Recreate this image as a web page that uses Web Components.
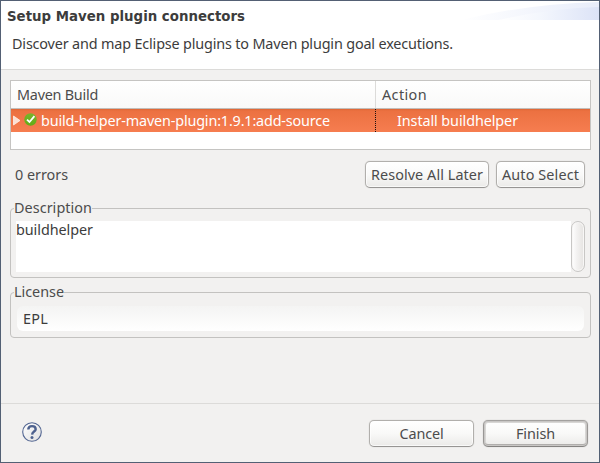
<!DOCTYPE html>
<html lang="en"><head><meta charset="utf-8"><title>Setup Maven plugin connectors</title>
<style>
html,body{margin:0;height:100%;overflow:hidden}
body{font:14.4px/20px "Noto Sans","Open Sans",sans-serif;color:#4c4c4c}
</style></head><body>
<wizard-dialog>
  <wizard-header slot="header">
    <fit-text slot="title" width="238">Setup Maven plugin connectors</fit-text>
    <fit-text slot="message" width="441">Discover and map Eclipse plugins to Maven plugin goal executions.</fit-text>
  </wizard-header>
  <build-table></build-table>
  <status-row>
    <fit-text width="53">0 errors</fit-text>
    <push-button slot="actions" style="width:124px"><fit-text width="112">Resolve All Later</fit-text></push-button>
    <push-button slot="actions" style="width:89px"><fit-text width="77">Auto Select</fit-text></push-button>
  </status-row>
  <group-box style="height:70px">
    <fit-text slot="legend" width="78">Description</fit-text>
    <text-area><fit-text width="77">buildhelper</fit-text></text-area>
  </group-box>
  <group-box style="height:46px;margin-top:14px">
    <fit-text slot="legend" width="50">License</fit-text>
    <text-field><fit-text width="25">EPL</fit-text></text-field>
  </group-box>
  <wizard-footer slot="footer">
    <push-button style="width:105px"><fit-text width="44">Cancel</fit-text></push-button>
    <push-button default style="width:105px"><fit-text width="39">Finish</fit-text></push-button>
  </wizard-footer>
</wizard-dialog>
<script>
function define(name, html, ready) {
  const tpl = document.createElement('template');
  tpl.innerHTML = html;
  customElements.define(name, class extends HTMLElement {
    constructor() {
      super();
      this.attachShadow({mode: 'open'}).append(tpl.content.cloneNode(true));
    }
    connectedCallback() { if (ready) ready(this); }
  });
}

define('push-button', `<style>
:host{box-sizing:border-box;display:flex;align-items:center;justify-content:center;height:27px;
 border:1px solid #b1afac;border-bottom-color:#979593;border-radius:5px;
 background:linear-gradient(#fff,#f9f9f8 50%,#ebeae8);box-shadow:inset 0 0 0 1px #ffffffb0,0 0 1px #b8b6b2}
:host([default]){border-color:#a3a19f #999795 #858381;box-shadow:inset 0 0 0 1px #c9c7c5,inset 0 -2px 0 #b0aeac,inset 0 0 0 2px #d8d7d5,0 0 1px #aaa}
</style><slot></slot>`);

define('wizard-header', `<style>
:host{box-sizing:border-box;display:grid;grid-template:28px 1fr / 1fr;height:69px;background:#fff;border-bottom:1px solid #dcdbd9;color:#3c3c3c}
.t{display:flex;justify-content:space-between;padding:6px 0 0 6px;font:bold 13.33px/20px "DejaVu Sans",sans-serif}
svg{display:block;flex:none;margin-top:-6px;width:138px;height:19px}
.m{padding:5px 0 0 11px}
</style><div class="t"><slot name="title"></slot>
<svg viewBox="0 0 138 19"><defs>
<linearGradient id="a"><stop offset="0" stop-color="#fff"/><stop offset=".4" stop-color="#f4f7fd"/><stop offset="1" stop-color="#dce3f7"/></linearGradient>
<linearGradient id="b"><stop offset="0" stop-color="#fff"/><stop offset="1" stop-color="#e8edfa"/></linearGradient></defs>
<path d="M0 19Q65 3 138 1V19Z" fill="url(#b)"/><path d="M38 19Q90 7 138 6V19Z" fill="url(#a)"/></svg></div>
<div class="m"><slot name="message"></slot></div>`);

define('build-table', `<style>
:host{box-sizing:border-box;display:grid;grid-template-rows:28px 23px 1fr;height:70px;margin:0 -1px 0 0;border:1px solid #c5c4c2;background:#fff}
.h,.r{display:grid;grid-template-columns:364px 1fr}
.h{box-sizing:border-box;background:linear-gradient(#fff,#f9f9f8);border-bottom:1px solid #c2bdb9}
.h>div{padding:4px 0 0 6px}
.h>div+div{border-left:1px solid #dcdbd9}
.r{background:linear-gradient(#dd6635,#ec7141 2px,#f67d50);color:#fff}
.r>div{display:flex;align-items:flex-start;padding-top:2px}
.r>div+div{border-left:1px dotted #1a1010;padding-left:21px}
.arrow{width:8px;height:11px;margin:4px 0 0 2px}
.ok{width:13px;height:13px;margin:2px 4px 0 3px}
svg{flex:none;display:block}
</style><div class="h"><div><fit-text width="81">Maven Build</fit-text></div><div><fit-text width="45">Action</fit-text></div></div>
<div class="r"><div>
<svg class="arrow" viewBox="0 0 8 11"><path d="M.5 1V10L7 5.5Z" fill="#fce0d5" stroke="#fff1e9" stroke-width=".8"/></svg>
<svg class="ok" viewBox="0 0 13 13"><defs><linearGradient id="g" x2="0" y2="1"><stop stop-color="#78b52c"/><stop offset="1" stop-color="#62ac16"/></linearGradient></defs><circle cx="6.5" cy="6.5" r="6.2" fill="url(#g)"/><path d="M3 6.6L5.5 9L10.4 3.2" fill="none" stroke="#fff" stroke-width="1.8"/></svg>
<fit-text width="289">build-helper-maven-plugin:1.9.1:add-source</fit-text></div>
<div><fit-text width="121">Install buildhelper</fit-text></div></div>`);

define('status-row', `<style>
:host{display:flex;align-items:flex-start;justify-content:space-between;padding:11px 5px 0 5px;height:58px;box-sizing:border-box}
.l{padding-top:4px}.a{display:flex;gap:7px}
</style><div class="l"><slot></slot></div><div class="a"><slot name="actions"></slot></div>`);

define('group-box', `<style>
:host{display:flow-root;margin-right:-1px}
fieldset{box-sizing:border-box;height:calc(100% + 10px);margin:-10px 0 0;padding:0 5px;border:1px solid #c3c2c0;border-radius:4px;min-width:0}
legend{padding:0;margin-left:-2px;height:20px}
</style><fieldset><legend><slot name="legend"></slot></legend><slot></slot></fieldset>`);

define('text-area', `<style>
:host{display:flex;height:51px;margin-top:3px;color:#3c3c3c}
.t{flex:1;background:#fff;line-height:18px}
.s{box-sizing:border-box;width:14px;border:1px solid #c8c7c5;border-radius:7px;background:linear-gradient(90deg,#fff,#f3f2f1 40%,#e5e3e1);box-shadow:inset 0 0 0 1px #f8f7f6}
</style><div class="t"><slot></slot></div><div class="s"></div>`);

define('text-field', `<style>
:host{display:block;box-sizing:border-box;height:25px;margin:4px 1px 0;padding:3px 0 0 6px;border-radius:6px;background:linear-gradient(#f4f4f3,#fff);color:#3c3c3c}
</style><slot></slot>`);

define('wizard-footer', `<style>
:host{box-sizing:border-box;display:flex;gap:9px;height:59px;padding:16px 11px 0 21px;border-top:1px solid #dcdbd9}
svg{display:block;width:20px;height:20px;margin:2px auto 0 0}
</style><svg viewBox="0 0 20 20"><defs><linearGradient id="h" x2="1" y2="1"><stop stop-color="#fff"/><stop offset="1" stop-color="#dfdfdf"/></linearGradient></defs>
<circle cx="10" cy="10" r="9.3" fill="url(#h)" stroke="#536692" stroke-width="1.1"/>
<path d="M6.3 7.6C6.3 5 7.8 4.1 10 4.1S13.7 5.2 13.7 7.2C13.7 9.5 10.2 9.7 10.1 12.6" fill="none" stroke="#4d618e" stroke-width="2.4"/><circle cx="10" cy="15.4" r="1.5" fill="#4d618e"/></svg><slot></slot>`);

define('wizard-dialog', `<style>
:host{box-sizing:border-box;display:grid;grid-template-rows:69px 1fr 59px;width:600px;height:463px;border:1px solid #536074;background:#f2f1f0}
main{padding:10px 9px 0;min-height:0}
</style><slot name="header"></slot><main><slot></slot></main><slot name="footer"></slot>`);

// One line of text, tracked so that it spans the width given in pixels.
// Registered last: its width is measured with the fonts its containers set.
define('fit-text', `<style>
:host{display:block;white-space:nowrap;flex:none}
span{display:inline-block}
</style><span><slot></slot></span>`, el => {
  const span = el.shadowRoot.querySelector('span');
  const target = +el.getAttribute('width');
  const n = el.textContent.length;
  span.style.letterSpacing = (target - span.getBoundingClientRect().width) / n + 'px';
});
</script></body></html>
